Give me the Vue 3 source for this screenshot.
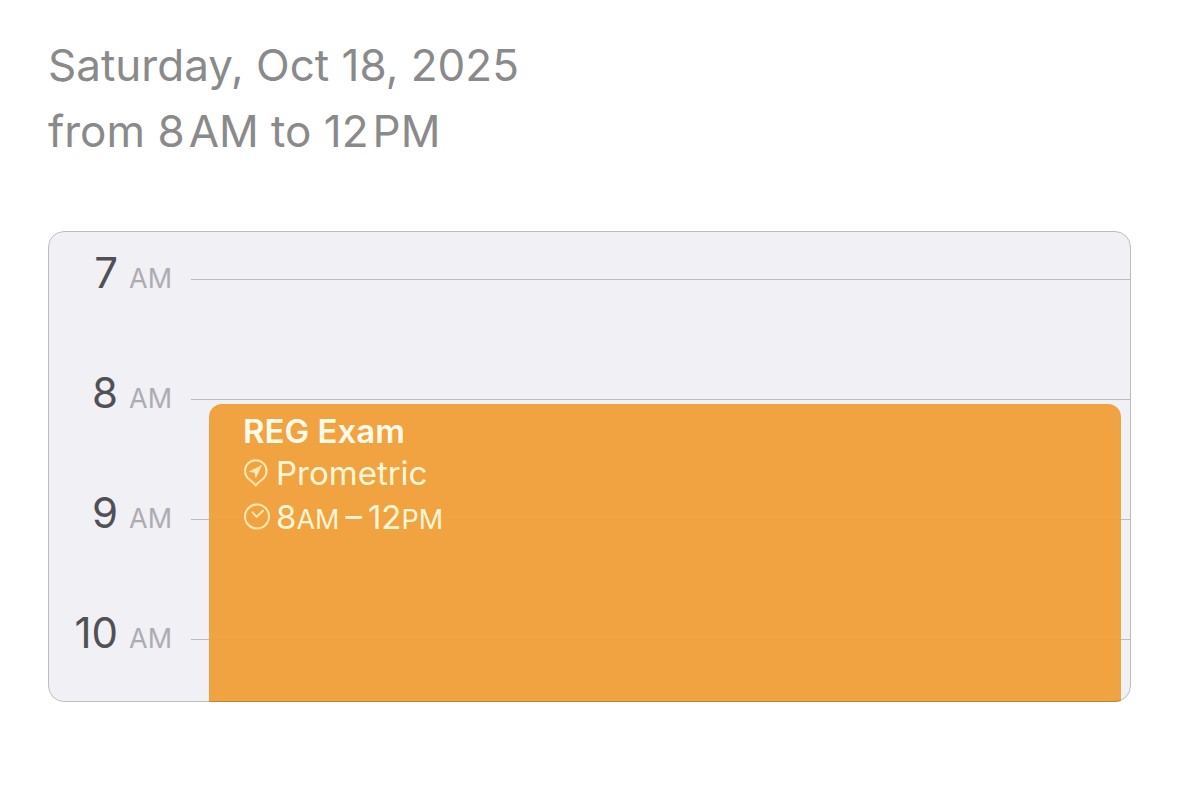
<script setup>
const hours = [7, 8, 9, 10]
</script>

<template>
  <main class="page">
    <header class="when">
      <div>Saturday, Oct 18, 2025</div>
      <div>from 8&#8202;AM to 12&#8202;PM</div>
    </header>

    <section class="calendar">
      <div v-for="hour in hours" :key="hour" class="row">
        <span class="hour">{{ hour }}</span>
        <span class="period">AM</span>
        <span class="rule"></span>
      </div>

      <article class="event">
        <h1 class="title">REG Exam</h1>
        <div class="detail">
          <svg class="icon" viewBox="0 0 28 32" aria-hidden="true">
            <path d="M12.8 28.6 C11.6 26.4 9.6 25 7 23 C3.8 20.6 2 17.6 2 14 A10.8 10.8 0 0 1 23.6 14 C23.6 17.6 21.8 20.6 18.6 23 C16 25 14 26.4 12.8 28.6 Z" fill="none" stroke="currentColor" stroke-width="2" stroke-linejoin="round" />
            <path d="M18.6 8.4 L6.4 14.6 L11.8 15.4 L12.8 20.6 Z" fill="currentColor" stroke="currentColor" stroke-width="0.6" stroke-linejoin="round" />
          </svg>
          <span>Prometric</span>
        </div>
        <div class="detail">
          <svg class="icon" viewBox="0 0 28 32" aria-hidden="true">
            <circle cx="14" cy="15.5" r="12" fill="none" stroke="currentColor" stroke-width="2" />
            <path d="M9.4 11.4 L13.6 15.8 L20 9.8" fill="none" stroke="currentColor" stroke-width="2" stroke-linecap="round" stroke-linejoin="round" />
          </svg>
          <span>8<small>AM</small>&#8201;–&#8201;12<small>PM</small></span>
        </div>
      </article>
    </section>
  </main>
</template>

<style>
body {
  margin: 0;
  background: #fff;
}
</style>

<style scoped>
.page {
  padding: 32px 48px 80px;
  font-family: Inter, "Liberation Sans", sans-serif;
}

.when {
  margin-bottom: 67px;
  color: #8a8a8b;
  font-size: 44px;
  line-height: 66px;
}

.calendar {
  position: relative;
  overflow: hidden;
  padding: 1px;
  border-radius: 16px;
  background: #f1f0f5;
}

.calendar::after {
  content: "";
  position: absolute;
  inset: 0;
  border: 1px solid rgba(60, 60, 67, 0.29);
  border-radius: 16px;
}

.row {
  display: flex;
  align-items: baseline;
  height: 120px;
  line-height: 82px;
}

.row:nth-child(4) {
  height: 109px;
}

.hour {
  width: 69px;
  color: #505055;
  font-size: 42px;
  text-align: right;
}

.period {
  width: 62px;
  margin-left: 11px;
  color: #adacb2;
  font-size: 27px;
}

.rule {
  flex: 1;
  align-self: flex-start;
  height: 1px;
  margin-top: 47px;
  background: #bdbcc2;
}

.event {
  position: absolute;
  top: 173px;
  right: 10px;
  bottom: 0;
  left: 161px;
  box-sizing: border-box;
  padding: 6px 34px;
  border-radius: 13px 13px 0 0;
  background: rgba(240, 159, 57, 0.96);
  color: #fff7d6;
  font-size: 33px;
  line-height: 42px;
}

.title {
  margin: 0;
  color: #fffbe9;
  font-size: 33px;
  font-weight: 600;
}

.detail {
  display: flex;
  align-items: center;
  gap: 5px;
}

.detail + .detail {
  margin-top: 2px;
}

.icon {
  width: 28px;
  height: 32px;
  color: #ffebb2;
}

small {
  font-size: 27px;
  line-height: 1;
}
</style>
